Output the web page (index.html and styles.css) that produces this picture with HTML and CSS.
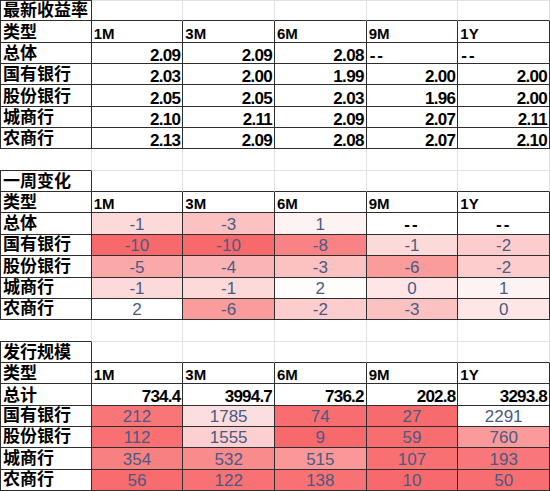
FILE: index.html
```html
<!DOCTYPE html>
<html>
<head>
<meta charset="utf-8">
<link rel="stylesheet" href="styles.css">
</head>
<body>
<div class="sheet">
  <!-- Section 1 -->
  <div class="c tb l top ttl">最新收益率</div>
  <div class="c bb toplt"></div><div class="c bb toplt"></div><div class="c bb toplt"></div><div class="c bb toplt"></div><div class="c bb toplt"></div>

  <div class="c tb l cn">类型</div>
  <div class="c tb hd">1M</div><div class="c tb hd">3M</div><div class="c tb hd">6M</div><div class="c tb hd">9M</div><div class="c tb hd">1Y</div>

  <div class="c tb l cn">总体</div>
  <div class="c tb bn">2.09</div><div class="c tb bn">2.09</div><div class="c tb bn">2.08</div><div class="c tb dl">--</div><div class="c tb dl">--</div>

  <div class="c tb l cn">国有银行</div>
  <div class="c tb bn">2.03</div><div class="c tb bn">2.00</div><div class="c tb bn">1.99</div><div class="c tb bn">2.00</div><div class="c tb bn">2.00</div>

  <div class="c tb l cn">股份银行</div>
  <div class="c tb bn">2.05</div><div class="c tb bn">2.05</div><div class="c tb bn">2.03</div><div class="c tb bn">1.96</div><div class="c tb bn">2.00</div>

  <div class="c tb l cn">城商行</div>
  <div class="c tb bn">2.10</div><div class="c tb bn">2.11</div><div class="c tb bn">2.09</div><div class="c tb bn">2.07</div><div class="c tb bn">2.11</div>

  <div class="c tb l cn">农商行</div>
  <div class="c tb bn">2.13</div><div class="c tb bn">2.09</div><div class="c tb bn">2.08</div><div class="c tb bn">2.07</div><div class="c tb bn">2.10</div>

  <div class="c bb"></div><div class="c"></div><div class="c"></div><div class="c"></div><div class="c"></div><div class="c"></div>

  <!-- Section 2 -->
  <div class="c tb l ttl">一周变化</div>
  <div class="c bb"></div><div class="c bb"></div><div class="c bb"></div><div class="c bb"></div><div class="c bb"></div>

  <div class="c tb l cn">类型</div>
  <div class="c tb hd">1M</div><div class="c tb hd">3M</div><div class="c tb hd">6M</div><div class="c tb hd">9M</div><div class="c tb hd">1Y</div>

  <div class="c tb l cn2">总体</div>
  <div class="c tb vn" style="background:#fddada">-1</div><div class="c tb vn" style="background:#fcc1c1">-3</div><div class="c tb vn" style="background:#fef3f3">1</div><div class="c tb dc">--</div><div class="c tb dc">--</div>

  <div class="c tb l cn2">国有银行</div>
  <div class="c tb vn" style="background:#f8696b">-10</div><div class="c tb vn" style="background:#f8696b">-10</div><div class="c tb vn" style="background:#f98284">-8</div><div class="c tb vn" style="background:#fddada">-1</div><div class="c tb vn" style="background:#fdcdce">-2</div>

  <div class="c tb l cn2">股份银行</div>
  <div class="c tb vn" style="background:#fba8a9">-5</div><div class="c tb vn" style="background:#fbb4b5">-4</div><div class="c tb vn" style="background:#fcc1c1">-3</div><div class="c tb vn" style="background:#fa9b9c">-6</div><div class="c tb vn" style="background:#fdcdce">-2</div>

  <div class="c tb l cn2">城商行</div>
  <div class="c tb vn" style="background:#fddada">-1</div><div class="c tb vn" style="background:#fddada">-1</div><div class="c tb vn" style="background:#fffcfc">2</div><div class="c tb vn" style="background:#fee6e6">0</div><div class="c tb vn" style="background:#fef3f3">1</div>

  <div class="c tb l cn2">农商行</div>
  <div class="c tb vn" style="background:#ffffff">2</div><div class="c tb vn" style="background:#fa9b9c">-6</div><div class="c tb vn" style="background:#fdcdce">-2</div><div class="c tb vn" style="background:#fcc1c1">-3</div><div class="c tb vn" style="background:#fee6e6">0</div>

  <div class="c bb"></div><div class="c"></div><div class="c"></div><div class="c"></div><div class="c"></div><div class="c"></div>

  <!-- Section 3 -->
  <div class="c tb l ttl">发行规模</div>
  <div class="c bb"></div><div class="c bb"></div><div class="c bb"></div><div class="c bb"></div><div class="c bb"></div>

  <div class="c tb l cn">类型</div>
  <div class="c tb hd">1M</div><div class="c tb hd">3M</div><div class="c tb hd">6M</div><div class="c tb hd">9M</div><div class="c tb hd">1Y</div>

  <div class="c tb l cn">总计</div>
  <div class="c tb tn">734.4</div><div class="c tb tn">3994.7</div><div class="c tb tn">736.2</div><div class="c tb tn">202.8</div><div class="c tb tn">3293.8</div>

  <div class="c tb l cn2">国有银行</div>
  <div class="c tb vn" style="background:#f97678">212</div><div class="c tb vn" style="background:#fddede">1785</div><div class="c tb vn" style="background:#f86d6f">74</div><div class="c tb vn" style="background:#f86b6d">27</div><div class="c tb vn" style="background:#ffffff">2291</div>

  <div class="c tb l cn2">股份银行</div>
  <div class="c tb vn" style="background:#f87072">112</div><div class="c tb vn" style="background:#fdcfd0">1555</div><div class="c tb vn" style="background:#f8696b">9</div><div class="c tb vn" style="background:#f86e70">59</div><div class="c tb vn" style="background:#fa9a9b">760</div>

  <div class="c tb l cn2">城商行</div>
  <div class="c tb vn" style="background:#f98081">354</div><div class="c tb vn" style="background:#fa8b8d">532</div><div class="c tb vn" style="background:#fa9899">515</div><div class="c tb vn" style="background:#f87072">107</div><div class="c tb vn" style="background:#f9777a">193</div>

  <div class="c tb l cn2">农商行</div>
  <div class="c tb vn" style="background:#f86c6e">56</div><div class="c tb vn" style="background:#f87173">122</div><div class="c tb vn" style="background:#f87274">138</div><div class="c tb vn" style="background:#f8696b">10</div><div class="c tb vn" style="background:#f86d6f">50</div>
</div>
</body>
</html>
```
FILE: styles.css
```css
html, body {
  margin: 0;
  padding: 0;
  background: #ffffff;
}

.sheet {
  width: 550px;
  height: 491px;
  display: grid;
  grid-template-columns: repeat(6, 1fr);
  grid-template-rows: repeat(23, 1fr);
  font-family: "Liberation Sans", "Noto Sans CJK SC", sans-serif;
  color: #000;
}

.c {
  box-sizing: border-box;
  border-right: 1px solid #e2e2e2;
  border-bottom: 1px solid #e2e2e2;
  display: flex;
  align-items: flex-end;
  line-height: 15px;
  white-space: nowrap;
  overflow: hidden;
  min-width: 0;
  min-height: 0;
}

.tb {
  border-right-color: #2e2e2e;
  border-bottom-color: #2e2e2e;
}

.bb {
  border-bottom-color: #2e2e2e;
}

.l {
  border-left: 1px solid #2e2e2e;
}

.top {
  border-top: 1px solid #2e2e2e;
}

.toplt {
  border-top: 1px solid #e2e2e2;
}

.ttl,
.cn,
.cn2 {
  font-size: 17px;
  font-weight: 700;
  padding-left: 2px;
  padding-bottom: 2px;
}

.cn2 {
  padding-bottom: 3px;
}

.hd {
  font-size: 15px;
  font-weight: 700;
  padding-left: 2px;
  padding-bottom: 1px;
}

.bn {
  font-size: 17px;
  font-weight: 700;
  letter-spacing: -0.7px;
  justify-content: flex-end;
  padding-right: 2px;
  padding-bottom: 0;
}

.tn {
  font-size: 17px;
  font-weight: 700;
  letter-spacing: -0.8px;
  justify-content: flex-end;
  padding-right: 2px;
  padding-bottom: 1px;
}

.dl {
  font-size: 17px;
  font-weight: 700;
  letter-spacing: 2px;
  padding-left: 3px;
  padding-bottom: 0;
}

.dc {
  font-size: 17px;
  font-weight: 700;
  letter-spacing: 2px;
  justify-content: center;
  padding-bottom: 2px;
}

.vn {
  font-size: 17px;
  color: #4a5a82;
  justify-content: center;
  padding-bottom: 2px;
}
```
